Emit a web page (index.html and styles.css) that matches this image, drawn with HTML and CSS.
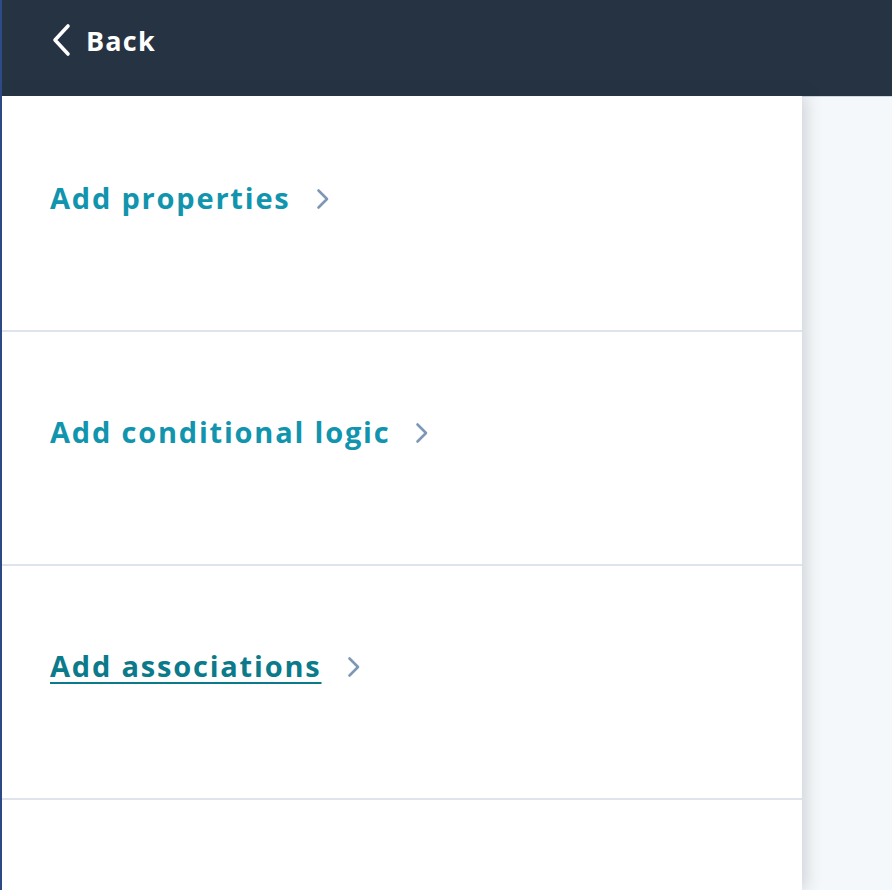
FILE: index.html
```html
<!DOCTYPE html>
<html>
<head>
<meta charset="utf-8">
<link rel="stylesheet" href="styles.css">
</head>
<body>
<div class="app">
  <header class="topbar">
    <a class="back" href="#">
      <svg class="back-icon" width="22" height="34" viewBox="0 0 22 34"><path d="M18 3 L5 17 L18 31" fill="none" stroke="#fff" stroke-width="3.6" stroke-linecap="round" stroke-linejoin="round"/></svg>
      <span>Back</span>
    </a>
  </header>
  <div class="body">
    <nav class="panel">
      <div class="row"><a class="link" href="#">Add properties</a><svg class="chev" width="14" height="22" viewBox="0 0 14 22"><path d="M2.5 2.5 L11 11 L2.5 19.5" fill="none" stroke="#7c98b6" stroke-width="2.6" stroke-linecap="round" stroke-linejoin="round"/></svg></div>
      <div class="row"><a class="link" href="#">Add conditional logic</a><svg class="chev" width="14" height="22" viewBox="0 0 14 22"><path d="M2.5 2.5 L11 11 L2.5 19.5" fill="none" stroke="#7c98b6" stroke-width="2.6" stroke-linecap="round" stroke-linejoin="round"/></svg></div>
      <div class="row"><a class="link hover" href="#">Add associations</a><svg class="chev" width="14" height="22" viewBox="0 0 14 22"><path d="M2.5 2.5 L11 11 L2.5 19.5" fill="none" stroke="#7c98b6" stroke-width="2.6" stroke-linecap="round" stroke-linejoin="round"/></svg></div>
      <div class="row last"></div>
    </nav>
    <div class="canvas"></div>
  </div>
</div>
</body>
</html>
```
FILE: styles.css
```css
html, body {
  margin: 0;
  padding: 0;
  height: 100%;
  overflow: hidden;
}
body {
  font-family: "Open Sans", "Noto Sans", sans-serif;
  background: #f5f8fa;
}
.app {
  height: 100%;
  display: flex;
  flex-direction: column;
  border-left: 2px solid #2f4a88;
  box-sizing: border-box;
}
.topbar {
  height: 96px;
  flex: none;
  background: #253342;
  display: flex;
  align-items: center;
  padding-left: 48px;
  padding-bottom: 16px;
  box-sizing: border-box;
}
.back {
  display: flex;
  align-items: center;
  gap: 14px;
  color: #fff;
  text-decoration: none;
  font-weight: 700;
  font-size: 27px;
  letter-spacing: 1.2px;
}
.back-icon {
  display: block;
}
.body {
  flex: 1;
  display: flex;
  border-top: 1px solid #cbd6e2;
  min-height: 0;
}
.panel {
  width: 800px;
  flex: none;
  background: #fff;
  box-shadow: 3px 0 16px rgba(45, 62, 80, 0.22);
  position: relative;
  z-index: 1;
  margin-top: -1px;
  padding-top: 2px;
}
.row {
  height: 234px;
  border-bottom: 2px solid #dfe3eb;
  display: flex;
  align-items: flex-start;
  padding: 82px 0 0 48px;
  box-sizing: border-box;
  gap: 25px;
}
.row.last {
  border-bottom: none;
}
.link {
  color: #1194ad;
  font-weight: 700;
  font-size: 29px;
  line-height: 36px;
  text-decoration: none;
  letter-spacing: 1.8px;
}
.link.hover {
  color: #0b7a8a;
  text-decoration: underline;
  text-underline-offset: 5px;
  text-decoration-thickness: 2px;
}
.chev {
  margin-top: 8px;
  display: block;
}
.canvas {
  flex: 1;
  background: #f5f8fa;
}
```
